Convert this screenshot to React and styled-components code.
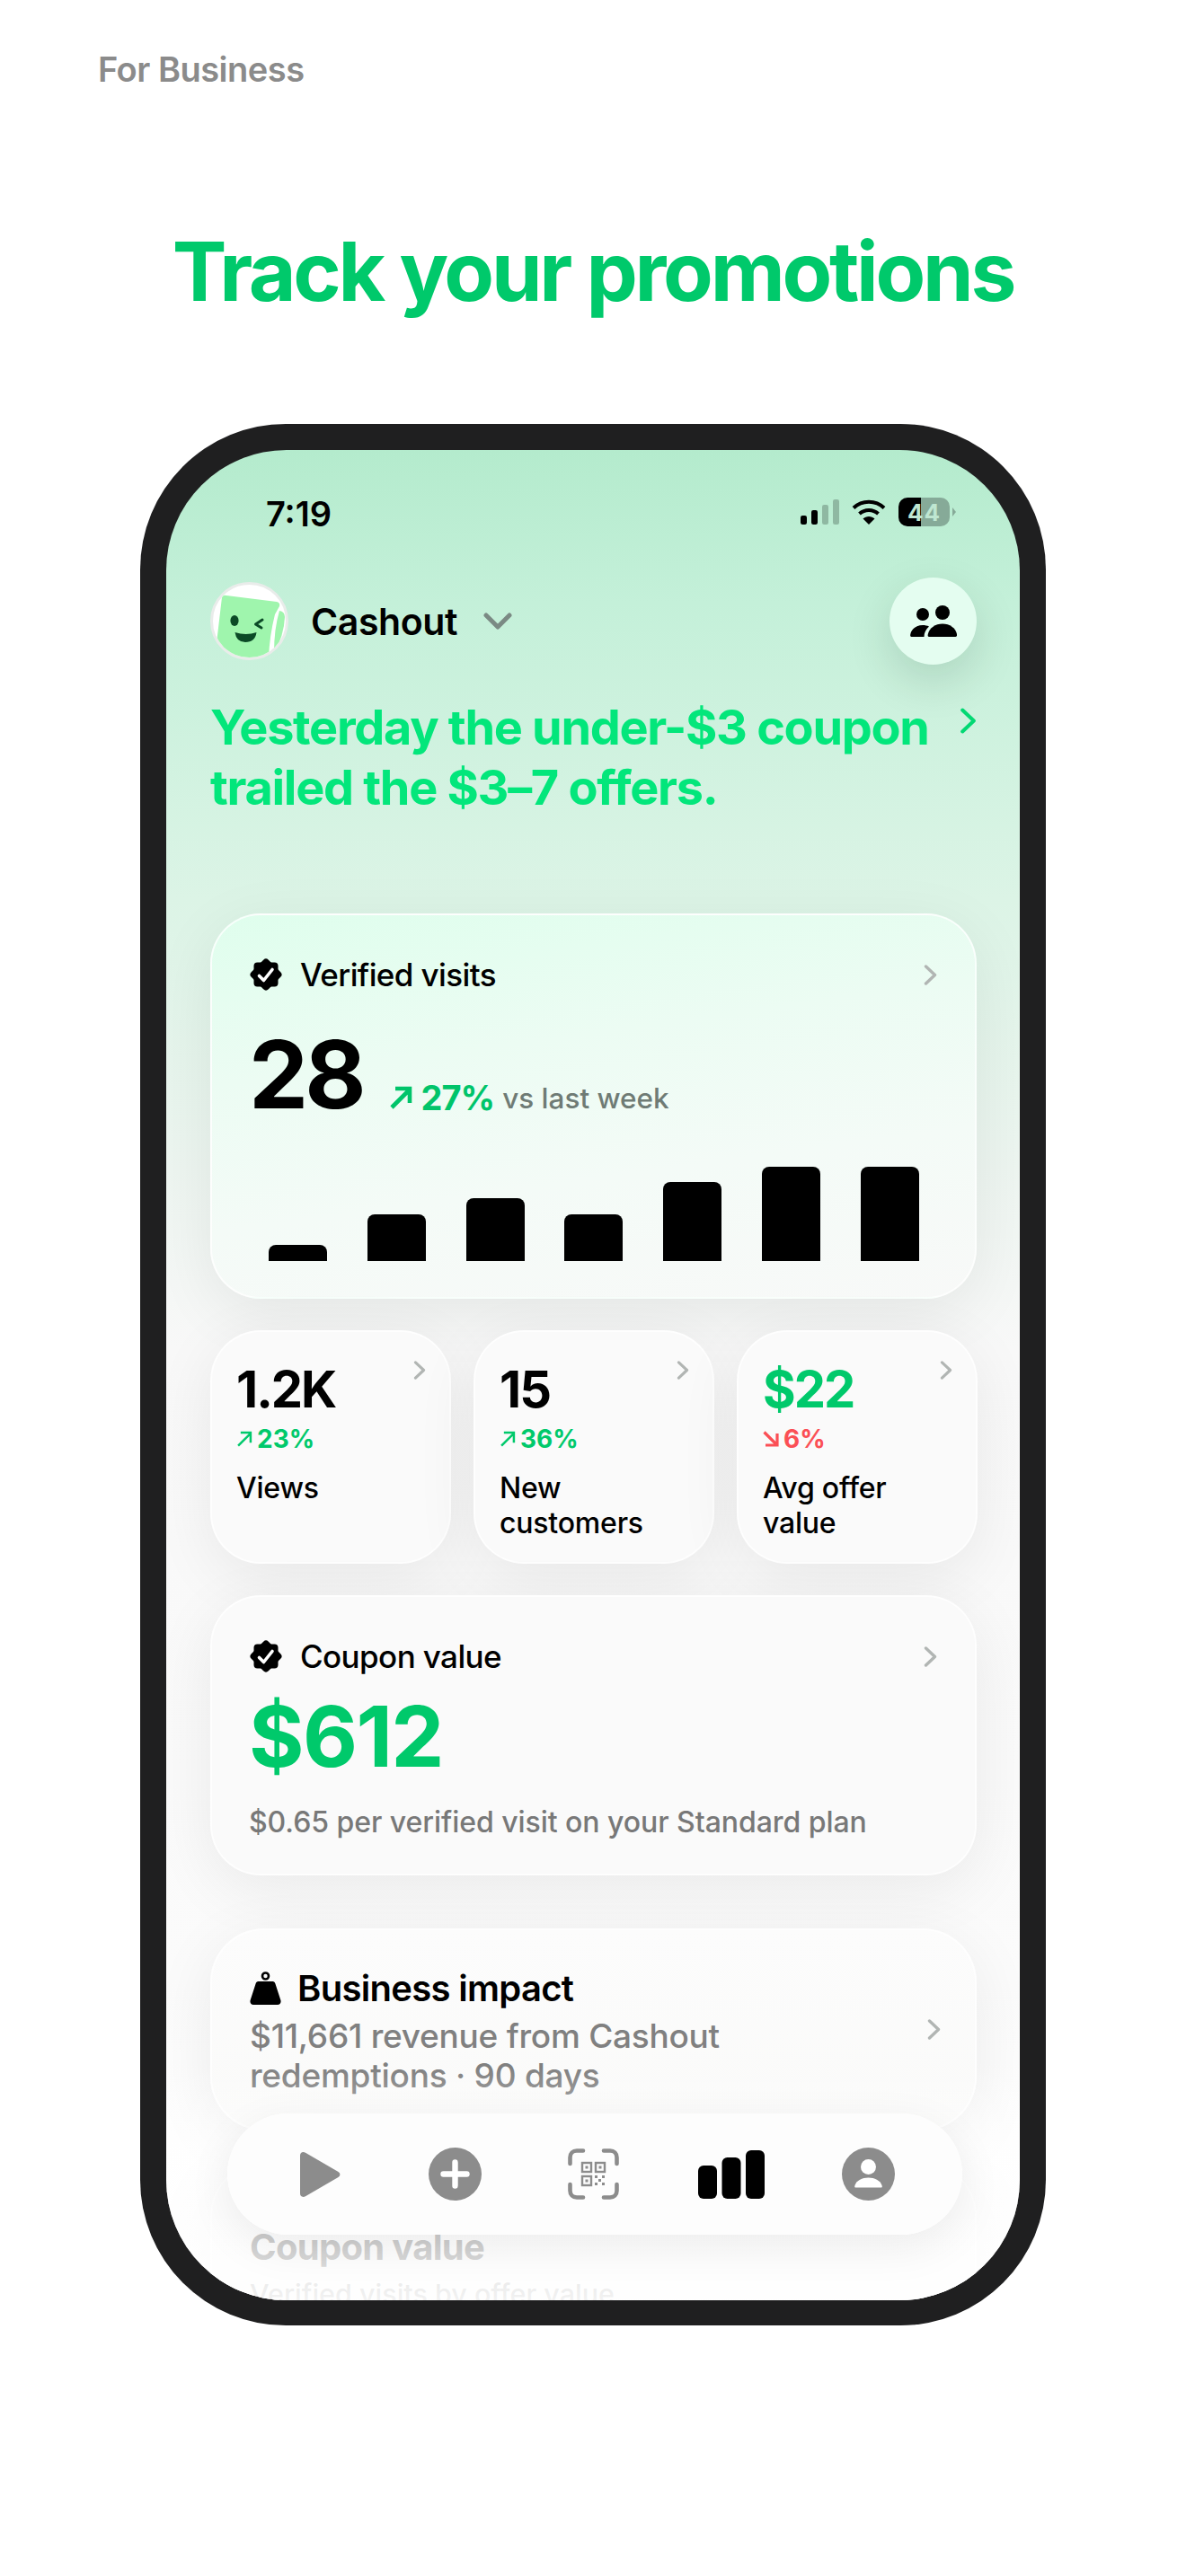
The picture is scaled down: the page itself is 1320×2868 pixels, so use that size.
import React from 'react'
import styled, { createGlobalStyle } from 'styled-components'

const GlobalStyle = createGlobalStyle`
  html, body {
    margin: 0;
    padding: 0;
    background: #ffffff;
    font-family: Inter, "Noto Sans", "Liberation Sans", sans-serif;
  }
  * { box-sizing: border-box; }
`

const Page = styled.div`
  width: 1320px;
  height: 2868px;
  background: #fff;
  overflow: hidden;
  display: flex;
  flex-direction: column;
  align-items: center;
`

const Eyebrow = styled.div`
  align-self: flex-start;
  margin: 54px 0 0 109px;
  height: 46px;
  line-height: 46px;
  font-size: 38px;
  font-weight: 600;
  letter-spacing: -0.5px;
  color: #8b8b8b;
`

const Title = styled.h1`
  margin: 142px 0 0;
  height: 120px;
  line-height: 120px;
  font-size: 91px;
  font-weight: 700;
  letter-spacing: -3.25px;
  color: #00c96b;
  white-space: nowrap;
`

const Phone = styled.div`
  margin-top: 110px;
  width: 1008px;
  height: 2117px;
  padding: 29px 29px 28px;
  border-radius: 162px;
  background: #1f1f20;
`

const Screen = styled.div`
  position: relative;
  height: 100%;
  padding-top: 39px;
  border-radius: 134px;
  overflow: hidden;
  background: linear-gradient(180deg, #b4ebcd 0, #c4f0d9 170px, #dcf4e6 500px, #edf5f0 800px, #f8f8f8 1000px, #fbfbfb 1700px, #ffffff 2060px);
`

const StatusBar = styled.div`
  height: 60px;
  padding: 4px 71px 0 111px;
  display: flex;
  align-items: center;
  justify-content: space-between;
`

const Clock = styled.span`
  font-size: 38px;
  font-weight: 600;
  letter-spacing: 0;
  color: #000;
`

const StatusIcons = styled.div`
  margin-top: -4px;
  display: flex;
  align-items: center;
  gap: 14px;
`

const Battery = styled.div`
  width: 57px;
  height: 32px;
  border-radius: 10px;
  overflow: hidden;
  background: linear-gradient(90deg, #000 0 44%, #86aa98 44% 100%);
  display: flex;
  align-items: center;
  justify-content: center;
  font-size: 26px;
  font-weight: 700;
  letter-spacing: 1px;
  color: #bfe6d1;
`

const BatteryTip = styled.div`
  width: 0;
  height: 0;
  margin-left: -11px;
  border-top: 5px solid transparent;
  border-bottom: 5px solid transparent;
  border-left: 4px solid #86aa98;
`

const Content = styled.div`
  padding: 0 48px 0 49px;
`

const HeaderRow = styled.div`
  margin-top: 43px;
  height: 97px;
  display: flex;
  align-items: center;
  justify-content: space-between;
`

const Brand = styled.div`
  display: flex;
  align-items: center;
`

const Avatar = styled.div`
  width: 87px;
  height: 87px;
  border-radius: 50%;
  border: 3px solid #e9ecea;
  background: #fff;
  overflow: hidden;
  svg { display: block; margin: -3px; }
`

const BrandName = styled.span`
  margin-left: 25px;
  font-size: 41px;
  font-weight: 600;
  letter-spacing: -0.4px;
  color: #000;
`

const BrandCaret = styled.svg`
  margin-left: 29px;
`

const RoundButton = styled.div`
  width: 97px;
  height: 97px;
  border-radius: 50%;
  background: #e4fdf0;
  box-shadow: 0 18px 50px rgba(0, 40, 20, 0.14);
  display: flex;
  align-items: center;
  justify-content: center;
`

const Insight = styled.div`
  margin-top: 36px;
  display: flex;
  justify-content: space-between;
  align-items: flex-start;
`

const InsightText = styled.div`
  font-size: 54px;
  line-height: 67px;
  font-weight: 700;
  letter-spacing: -1.3px;
  color: #03e67b;
`

const InsightArrow = styled.div`
  margin-top: 12px;
  display: flex;
`

const Card = styled.section`
  position: relative;
  border-radius: ${p => p.$radius || 56}px;
  border: 2px solid rgba(255, 255, 255, 0.75);
  background: ${p => p.$bg || '#fafafa'};
  box-shadow: 0 16px 70px rgba(0, 0, 0, 0.07);
`

const HeroCard = styled(Card)`
  margin-top: 107px;
  height: 429px;
  padding: 46px 42px 0 41px;
`

const CardHead = styled.div`
  display: flex;
  align-items: center;
  justify-content: space-between;
  height: 40px;
`

const CardLabel = styled.div`
  display: flex;
  align-items: center;
  gap: 19px;
  font-size: 35px;
  font-weight: 500;
  letter-spacing: -0.6px;
  color: #000;
`

const HeroValues = styled.div`
  margin-top: 41px;
  height: 100px;
  display: flex;
  align-items: flex-end;
`

const BigNumber = styled.div`
  font-size: 105px;
  line-height: 100px;
  font-weight: 700;
  letter-spacing: -4px;
  color: #000;
`

const Trend = styled.div`
  margin: 0 0 1px 30px;
  display: flex;
  align-items: center;
  gap: 9px;
`

const TrendValue = styled.span`
  font-size: 38px;
  font-weight: 700;
  letter-spacing: -1px;
  color: #00c46a;
`

const TrendNote = styled.span`
  font-size: 31.5px;
  font-weight: 500;
  color: #6f7b75;
`

const Bars = styled.div`
  margin: 53px 20px 0 22px;
  height: 105px;
  display: flex;
  align-items: flex-end;
  justify-content: space-between;
`

const Bar = styled.div`
  width: 65px;
  height: ${p => p.$h}px;
  background: #000;
  border-radius: 8px 8px 0 0;
`

const MetricRow = styled.div`
  margin-top: 35px;
  display: grid;
  grid-template-columns: repeat(3, 268px);
  gap: 25px;
`

const MetricCard = styled(Card)`
  height: 260px;
  padding: 32px 26px 0 27px;
  border-radius: 56px;
`

const MetricTop = styled.div`
  display: flex;
  align-items: flex-start;
  justify-content: space-between;
  height: 64px;
`

const MetricValue = styled.div`
  font-size: 56px;
  line-height: 64px;
  font-weight: 700;
  letter-spacing: -2px;
  color: ${p => (p.$green ? '#00c96b' : '#000')};
`

const MetricDelta = styled.div`
  margin-top: 8px;
  display: flex;
  align-items: center;
  gap: 5px;
  height: 30px;
  font-size: 28px;
  font-weight: 700;
  color: ${p => (p.$down ? '#fb4f55' : '#00c96b')};
`

const MetricLabel = styled.div`
  margin-top: 21px;
  font-size: 32px;
  line-height: 38.5px;
  font-weight: 500;
  letter-spacing: -0.2px;
  color: #000;
`

const ValueCard = styled(Card)`
  margin-top: 35px;
  height: 312px;
  padding: 46px 42px 0 41px;
`

const ValueAmount = styled.div`
  margin-top: 14px;
  font-size: 94px;
  line-height: 110px;
  font-weight: 700;
  letter-spacing: -1.6px;
  color: #00c96b;
`

const ValueNote = styled.div`
  margin-top: 21px;
  font-size: 32px;
  font-weight: 500;
  letter-spacing: -0.05px;
  color: #787878;
`

const ImpactCard = styled(Card)`
  margin-top: 59px;
  height: 225px;
  padding: 0 38px 0 42px;
  display: flex;
  align-items: center;
  justify-content: space-between;
`

const ImpactBody = styled.div`
  align-self: flex-start;
  padding-top: 44px;
`

const ImpactTitle = styled.div`
  display: flex;
  align-items: center;
  gap: 18px;
  height: 40px;
  font-size: 40px;
  font-weight: 600;
  letter-spacing: -0.7px;
  color: #000;
`

const ImpactText = styled.div`
  margin-top: 12px;
  font-size: 37px;
  line-height: 44px;
  font-weight: 500;
  letter-spacing: -0.25px;
  color: #808080;
`

const FadedCard = styled(Card)`
  margin-top: 35px;
  height: 300px;
  padding: 71px 42px 0;
`

const FadedTitle = styled.div`
  font-size: 40px;
  line-height: 44px;
  font-weight: 700;
  letter-spacing: -0.7px;
  color: #3c3c3c;
`

const FadedText = styled.div`
  margin-top: 8px;
  font-size: 30.5px;
  line-height: 44px;
  font-weight: 500;
  color: #7c7c7c;
`

const BottomFade = styled.div`
  position: absolute;
  left: 0;
  right: 0;
  bottom: 0;
  height: 260px;
  background: linear-gradient(180deg, rgba(255, 255, 255, 0) 0, rgba(255, 255, 255, 0.55) 35%, rgba(255, 255, 255, 0.75) 75%, rgba(255, 255, 255, 0.9) 100%);
`

const TabBar = styled.nav`
  position: absolute;
  left: 68px;
  top: 1852px;
  width: 818px;
  height: 135px;
  padding: 0 29px;
  border-radius: 68px;
  background: rgba(253, 253, 253, 0.97);
  box-shadow: 0 14px 50px rgba(0, 0, 0, 0.07);
  display: grid;
  grid-template-columns: repeat(5, 1fr);
  align-items: center;
  justify-items: center;
`

const Tab = styled.div`
  display: flex;
  transform: translateX(${p => p.$nudge || 0}px);
`

const Chevron = ({ w = 15, h = 23, color = '#b1b5b3', sw = 3.4 }) => (
  <svg width={w} height={h} viewBox="0 0 15 23" fill="none" style={{ flexShrink: 0 }}>
    <path d="M2.5 2 L12.5 11.5 L2.5 21" stroke={color} strokeWidth={sw} strokeLinecap="round" strokeLinejoin="round" />
  </svg>
)

const BadgeIcon = () => (
  <svg width="38" height="38" viewBox="0 0 38 38" style={{ flexShrink: 0 }}>
    {[0, 45].map(a => (
      <rect key={a} x="5.5" y="5.5" width="27" height="27" rx="4" fill="#000" transform={`rotate(${a} 19 19)`} />
    ))}
    <path d="M11.5 20.5 L16.5 25.5 L26 13.5" fill="none" stroke="#fff" strokeWidth="3.6" strokeLinecap="round" strokeLinejoin="round" />
  </svg>
)

const WeightIcon = () => (
  <svg width="35" height="37" viewBox="0 0 35 37" style={{ flexShrink: 0 }}>
    <circle cx="17.5" cy="5" r="3.5" fill="none" stroke="#000" strokeWidth="2.6" />
    <path d="M9.5 11 H25.5 C27 11 28 12 28.4 13.5 L34.4 32 C35.2 34.8 33.4 37 31 37 H4 C1.6 37 -0.2 34.8 0.6 32 L6.6 13.5 C7 12 8 11 9.5 11 Z" fill="#000" />
  </svg>
)

const ArrowUp = ({ size = 26, color = '#00c46a', sw = 4.6 }) => (
  <svg width={size} height={size} viewBox="0 0 26 26" fill="none" style={{ flexShrink: 0 }}>
    <path d="M3 24 L23 4 M7 3 H23 V19" stroke={color} strokeWidth={sw} />
  </svg>
)

const ArrowDown = ({ size = 18, color = '#fb4f55' }) => (
  <svg width={size} height={size} viewBox="0 0 18 18" fill="none" style={{ flexShrink: 0 }}>
    <path d="M1.5 1.5 L15 15 M3 16 H16 V3" stroke={color} strokeWidth="3.2" />
  </svg>
)

const AvatarArt = () => (
  <svg width="87" height="87" viewBox="0 0 87 87">
    <path d="M13 17 Q14 14 18 15 L74 22 Q78 23 77 27 L72 36 Q66 60 65 84 L30 87 L7 68 Z" fill="#9ff5ad" />
    <path d="M77 32 Q83 33 83 39 Q82 60 71 79 Q71 52 77 32 Z" fill="#9ff5ad" />
    <ellipse cx="27" cy="43" rx="4.6" ry="6" fill="#0b4a26" />
    <path d="M58 42 L50.5 47 L57 51" fill="none" stroke="#0b4a26" strokeWidth="3" strokeLinecap="round" strokeLinejoin="round" />
    <path d="M27.5 56 Q40 60 51.5 56 Q50 67 39 67 Q29 67 27.5 56 Z" fill="#0b4a26" />
  </svg>
)

const PeopleIcon = () => (
  <svg width="52" height="35" viewBox="0 0 52 35">
    <circle cx="14" cy="10" r="7" fill="#000" />
    <circle cx="36" cy="8" r="8" fill="#000" />
    <path d="M1.5 35 C0 35 0 33.5 0.3 32 C1.5 26 7 22 14 22 C16.5 22 19 22.5 21 23.5 C17.5 26.5 15.5 30.5 15.5 35 Z" fill="#000" />
    <path d="M21 35 C19.5 35 19.5 33.5 19.8 32 C21.5 25 28 20.5 36 20.5 C44 20.5 50.5 25 52 32 C52.3 33.5 52 35 50.5 35 Z" fill="#000" />
  </svg>
)

const WifiIcon = () => (
  <svg width="38" height="28" viewBox="0 0 38 28" fill="none">
    <path d="M2 9.5 C11.5 0.5 26.5 0.5 36 9.5" stroke="#000" strokeWidth="4" />
    <path d="M8.5 16 C14.5 10.5 23.5 10.5 29.5 16" stroke="#000" strokeWidth="4" />
    <path d="M19 28 L12.5 21.5 C16 18 22 18 25.5 21.5 Z" fill="#000" />
  </svg>
)

const SignalIcon = () => (
  <svg width="43" height="28" viewBox="0 0 43 28">
    <rect x="0" y="18" width="7" height="10" rx="2.2" fill="#000" />
    <rect x="12" y="12" width="7" height="16" rx="2.2" fill="#000" />
    <rect x="24" y="6" width="7" height="22" rx="2.2" fill="#8fb8a2" />
    <rect x="36" y="0" width="7" height="28" rx="2.2" fill="#8fb8a2" />
  </svg>
)

const PlayIcon = () => (
  <svg width="45" height="50" viewBox="0 0 45 50">
    <path d="M0 4 C0 0.5 3 -0.8 6 0.8 L42.5 22 C45 23.5 45 26.5 42.5 28 L6 49.2 C3 50.8 0 49.5 0 46 Z" fill="#8c8c8c" />
  </svg>
)

const PlusIcon = () => (
  <svg width="59" height="59" viewBox="0 0 59 59">
    <circle cx="29.5" cy="29.5" r="29.5" fill="#8c8c8c" />
    <path d="M29.5 16.5 V42.5 M16.5 29.5 H42.5" stroke="#fff" strokeWidth="6.4" strokeLinecap="round" />
  </svg>
)

const QrIcon = () => (
  <svg width="57" height="57" viewBox="0 0 57 57" fill="none">
    <path d="M2.5 17 V10 C2.5 5.5 5.5 2.5 10 2.5 H17 M40 2.5 H47 C51.5 2.5 54.5 5.5 54.5 10 V17 M2.5 40 V47 C2.5 51.5 5.5 54.5 10 54.5 H17 M40 54.5 H47 C51.5 54.5 54.5 51.5 54.5 47 V40" stroke="#8c8c8c" strokeWidth="4.6" strokeLinecap="round" />
    <g stroke="#8c8c8c" strokeWidth="2.4">
      <rect x="16" y="16" width="10" height="10" />
      <rect x="31" y="16" width="10" height="10" />
      <rect x="16" y="31" width="10" height="10" />
    </g>
    <g fill="#8c8c8c">
      <rect x="19.5" y="19.5" width="3" height="3" />
      <rect x="34.5" y="19.5" width="3" height="3" />
      <rect x="19.5" y="34.5" width="3" height="3" />
      <rect x="30" y="30" width="3" height="3" />
      <rect x="38" y="30" width="3" height="3" />
      <rect x="34" y="34" width="3" height="3" />
      <rect x="30" y="38" width="3" height="3" />
      <rect x="38" y="38" width="3" height="3" />
    </g>
  </svg>
)

const StatsIcon = () => (
  <svg width="74" height="54" viewBox="0 0 74 54">
    <rect x="0" y="17" width="21" height="37" rx="6" fill="#000" />
    <rect x="26.5" y="8" width="21" height="46" rx="6" fill="#000" />
    <rect x="53" y="0" width="21" height="54" rx="6" fill="#000" />
  </svg>
)

const ProfileIcon = () => (
  <svg width="59" height="59" viewBox="0 0 59 59">
    <circle cx="29.5" cy="29.5" r="29.5" fill="#8c8c8c" />
    <circle cx="29.5" cy="21.5" r="8.5" fill="#fff" />
    <path d="M15 44.5 C14 44.5 14 43.5 14.5 42 C16.5 36.5 22.5 33.5 29.5 33.5 C36.5 33.5 42.5 36.5 44.5 42 C45 43.5 45 44.5 44 44.5 Z" fill="#fff" />
  </svg>
)

const barHeights = [18, 52, 70, 52, 88, 105, 105]

const metrics = [
  { value: '1.2K', delta: '23%', label: 'Views' },
  { value: '15', delta: '36%', label: 'New customers' },
  { value: '$22', delta: '6%', label: 'Avg offer value', green: true, down: true },
]

export default function App() {
  return (
    <Page>
      <GlobalStyle />
      <Eyebrow>For Business</Eyebrow>
      <Title>Track your promotions</Title>
      <Phone>
        <Screen>
          <StatusBar>
            <Clock>7:19</Clock>
            <StatusIcons>
              <SignalIcon />
              <WifiIcon />
              <Battery>44</Battery>
              <BatteryTip />
            </StatusIcons>
          </StatusBar>
          <Content>
            <HeaderRow>
              <Brand>
                <Avatar><AvatarArt /></Avatar>
                <BrandName>Cashout</BrandName>
                <BrandCaret width="32" height="20" viewBox="0 0 32 20" fill="none">
                  <path d="M3 3 L16 16 L29 3" stroke="#7b8a84" strokeWidth="5" strokeLinecap="round" strokeLinejoin="round" />
                </BrandCaret>
              </Brand>
              <RoundButton><PeopleIcon /></RoundButton>
            </HeaderRow>
            <Insight>
              <InsightText>
                Yesterday the under-$3 coupon
                <br />
                trailed the $3–7 offers.
              </InsightText>
              <InsightArrow><Chevron w={19} h={29} color="#03d873" sw={3.2} /></InsightArrow>
            </Insight>

            <HeroCard $bg="linear-gradient(172deg, #dffeed 0%, #ecfcf3 35%, #f4fbf7 65%, #f8f9f8 100%)">
              <CardHead>
                <CardLabel><BadgeIcon />Verified visits</CardLabel>
                <Chevron />
              </CardHead>
              <HeroValues>
                <BigNumber>28</BigNumber>
                <Trend>
                  <ArrowUp />
                  <TrendValue>27%</TrendValue>
                  <TrendNote>vs last week</TrendNote>
                </Trend>
              </HeroValues>
              <Bars>
                {barHeights.map((h, i) => <Bar key={i} $h={h} />)}
              </Bars>
            </HeroCard>

            <MetricRow>
              {metrics.map(m => (
                <MetricCard key={m.label}>
                  <MetricTop>
                    <MetricValue $green={m.green}>{m.value}</MetricValue>
                    <Chevron w={14} h={21} />
                  </MetricTop>
                  <MetricDelta $down={m.down}>
                    {m.down ? <ArrowDown /> : <ArrowUp size={18} color="#00c96b" sw={3.6} />}
                    {m.delta}
                  </MetricDelta>
                  <MetricLabel>{m.label}</MetricLabel>
                </MetricCard>
              ))}
            </MetricRow>

            <ValueCard>
              <CardHead>
                <CardLabel><BadgeIcon />Coupon value</CardLabel>
                <Chevron />
              </CardHead>
              <ValueAmount>$612</ValueAmount>
              <ValueNote>$0.65 per verified visit on your Standard plan</ValueNote>
            </ValueCard>

            <ImpactCard $radius={60} $bg="linear-gradient(180deg, #fcfcfc, #fafaf9)">
              <ImpactBody>
                <ImpactTitle><WeightIcon />Business impact</ImpactTitle>
                <ImpactText>
                  $11,661 revenue from Cashout
                  <br />
                  redemptions · 90 days
                </ImpactText>
              </ImpactBody>
              <Chevron />
            </ImpactCard>

            <FadedCard $radius={60}>
              <FadedTitle>Coupon value</FadedTitle>
              <FadedText>Verified visits by offer value</FadedText>
            </FadedCard>
          </Content>
          <BottomFade />
          <TabBar>
            <Tab $nudge={-2}><PlayIcon /></Tab>
            <Tab $nudge={-4}><PlusIcon /></Tab>
            <Tab $nudge={-2}><QrIcon /></Tab>
            <Tab><StatsIcon /></Tab>
            <Tab><ProfileIcon /></Tab>
          </TabBar>
        </Screen>
      </Phone>
    </Page>
  )
}
